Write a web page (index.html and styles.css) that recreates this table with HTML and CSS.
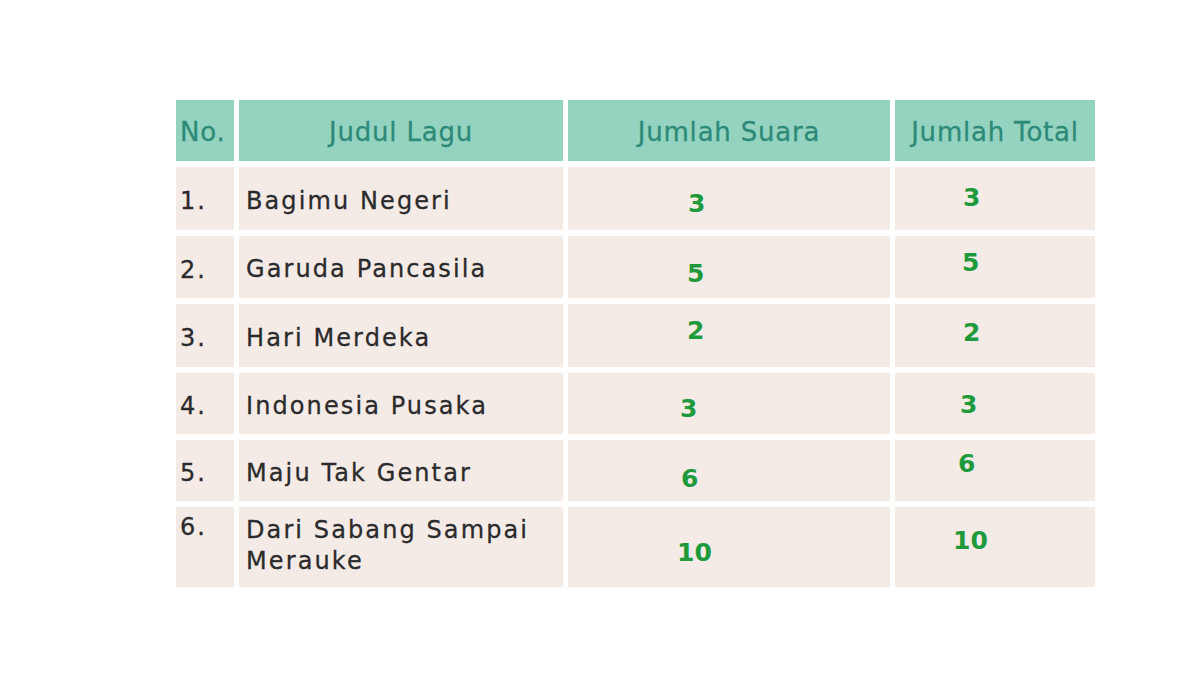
FILE: index.html
```html
<!DOCTYPE html>
<html lang="id">
<head>
<meta charset="utf-8">
<title>Tabel Lagu</title>
<link rel="stylesheet" href="styles.css">
</head>
<body>
<div class="page">
  <div class="table">
    <div class="cell head no">No.</div>
    <div class="cell head center">Judul Lagu</div>
    <div class="cell head center">Jumlah Suara</div>
    <div class="cell head center">Jumlah Total</div>

    <div class="cell no">1.</div>
    <div class="cell title">Bagimu Negeri</div>
    <div class="cell num suara"><span class="val s1">3</span></div>
    <div class="cell num total"><span class="val t1">3</span></div>

    <div class="cell no">2.</div>
    <div class="cell title">Garuda Pancasila</div>
    <div class="cell num suara"><span class="val s2">5</span></div>
    <div class="cell num total"><span class="val t2">5</span></div>

    <div class="cell no">3.</div>
    <div class="cell title">Hari Merdeka</div>
    <div class="cell num suara"><span class="val s3">2</span></div>
    <div class="cell num total"><span class="val t3">2</span></div>

    <div class="cell no">4.</div>
    <div class="cell title">Indonesia Pusaka</div>
    <div class="cell num suara"><span class="val s4">3</span></div>
    <div class="cell num total"><span class="val t4">3</span></div>

    <div class="cell no">5.</div>
    <div class="cell title">Maju Tak Gentar</div>
    <div class="cell num suara"><span class="val s5">6</span></div>
    <div class="cell num total"><span class="val t5">6</span></div>

    <div class="cell no top">6.</div>
    <div class="cell title last">Dari Sabang Sampai<br>Merauke</div>
    <div class="cell num suara"><span class="val s6">10</span></div>
    <div class="cell num total"><span class="val t6">10</span></div>
  </div>
</div>
</body>
</html>
```

FILE: styles.css
```css
html, body {
  margin: 0;
  padding: 0;
  background: #ffffff;
}

.page {
  width: 1200px;
  height: 675px;
  padding: 100px 0 0 176px;
  box-sizing: border-box;
  font-family: "DejaVu Sans", "Liberation Sans", sans-serif;
}

.table {
  display: grid;
  grid-template-columns: 58px 324px 322px 200px;
  grid-template-rows: 61px 63px 62px 63px 61px 61px 80px;
  column-gap: 5px;
  row-gap: 6px;
  width: 920px;
}

.cell {
  background: #f5ebe6;
  display: flex;
  align-items: center;
  font-size: 24px;
  letter-spacing: 2.1px;
  color: #2b2a2c;
  -webkit-text-stroke: 0.3px #2b2a2c;
  box-sizing: border-box;
  padding-top: 5px;
}

.head {
  background: #94d3c0;
  color: #2e8a78;
  -webkit-text-stroke: 0.3px #2e8a78;
  font-size: 26px;
  letter-spacing: 0.8px;
  padding-top: 3px;
}

.center {
  justify-content: center;
}

.no {
  padding-left: 4px;
}

.no.top {
  align-items: flex-start;
  padding-top: 6px;
}

.title {
  padding-left: 7px;
  line-height: 31px;
}

.title.last {
  padding-top: 0;
  padding-bottom: 3px;
}

.num {
  align-items: flex-start;
  -webkit-text-stroke: 0;
  letter-spacing: 0;
  padding-top: 0;
}

.suara {
  padding-left: 120px;
}

.total {
  padding-left: 68px;
}

.val {
  color: #1e9a3c;
  font-weight: bold;
  font-size: 25px;
  line-height: 28px;
  position: relative;
}

.s1 { top: 23px; left: 0; }
.s2 { top: 24px; left: -1px; }
.s3 { top: 13px; left: -1px; }
.s4 { top: 22px; left: -8px; }
.s5 { top: 25px; left: -7px; }
.s6 { top: 32px; left: -11px; }

.t1 { top: 17px; left: 0; }
.t2 { top: 13px; left: -1px; }
.t3 { top: 15px; left: 0; }
.t4 { top: 18px; left: -3px; }
.t5 { top: 10px; left: -5px; }
.t6 { top: 20px; left: -10px; }
```
